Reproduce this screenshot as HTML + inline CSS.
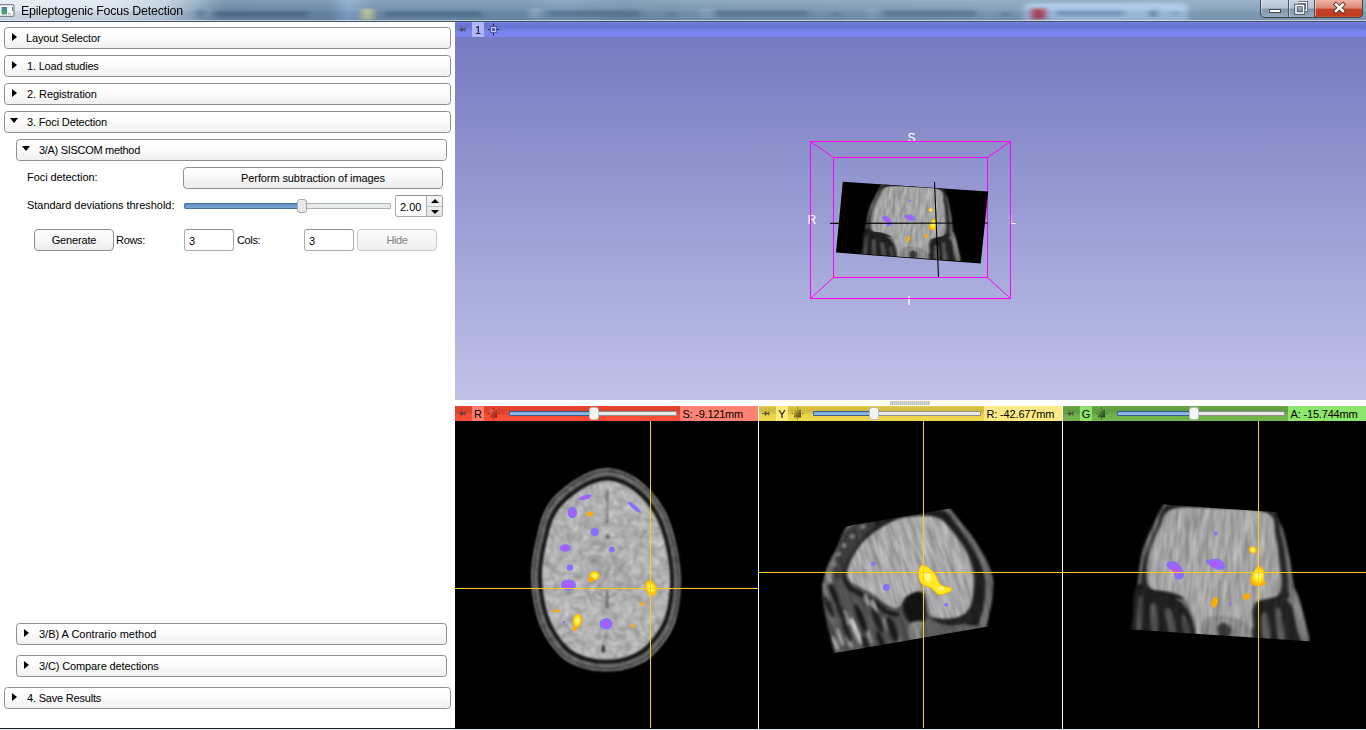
<!DOCTYPE html>
<html>
<head>
<meta charset="utf-8">
<title>Epileptogenic Focus Detection</title>
<style>
html,body{margin:0;padding:0;}
body{width:1366px;height:730px;overflow:hidden;position:relative;background:#fff;font-family:"Liberation Sans",sans-serif;font-size:11px;color:#000;}
.abs{position:absolute;}
/* title bar */
#titlebar{position:absolute;left:0;top:0;width:1366px;height:22px;overflow:hidden;background:#7b97b2;}
#title{position:absolute;left:21px;top:4px;font-size:12.4px;letter-spacing:-0.19px;line-height:15px;white-space:nowrap;color:#000;}
/* left panel */
#left{position:absolute;left:0;top:22px;width:455px;height:706px;background:#fff;}
.cbtn{position:absolute;height:20px;border:1px solid #8e8f8f;border-radius:3.5px;background:linear-gradient(to bottom,#ffffff 0,#fbfbfb 45%,#f0f0f0 100%);box-sizing:content-box;}
.cbtn span{position:absolute;left:21px;top:4px;line-height:13px;white-space:nowrap;}
.cbtn i{position:absolute;display:block;width:0;height:0;}
.cbtn i.r{left:7px;top:4.6px;border-left:5px solid #000;border-top:4.7px solid transparent;border-bottom:4.7px solid transparent;}
.cbtn i.d{left:5px;top:6px;border-top:5.5px solid #000;border-left:4.8px solid transparent;border-right:4.8px solid transparent;}
.lbl{position:absolute;white-space:nowrap;line-height:13px;}
.pbtn{position:absolute;border:1px solid #8e8f8f;border-radius:4px;box-sizing:border-box;background:linear-gradient(to bottom,#fefefe 0,#f7f7f7 50%,#ececec 100%);text-align:center;}
.edit{position:absolute;border:1px solid #a9abb0;border-top-color:#8d9096;border-radius:3px;box-sizing:border-box;background:#fff;}
.pbtn.dis{color:#838383;border-color:#c3c6ca;background:linear-gradient(to bottom,#fdfdfd 0,#f6f6f6 50%,#eeeeee 100%);}
#groove{position:absolute;left:184px;top:181px;width:205px;height:4px;border:1px solid #b0b0b0;border-radius:1px;background:#e7eaea;}
#groovefill{position:absolute;left:184px;top:181px;width:118px;height:4px;border:1px solid #4a6f9c;border-radius:2px;background:linear-gradient(to bottom,#5f8fc4,#7aa7d6);}
#handle{position:absolute;left:297px;top:177px;width:8px;height:12px;border:1px solid #a4a6a8;border-radius:3px;background:radial-gradient(circle at 1px 1px,#c9c9c9 0,#c9c9c9 .5px,transparent .8px) 1px 1px/3px 3px,#eeeeee;}
#spbtn{position:absolute;right:0;top:0;width:15px;height:20px;border-left:1px solid #abadb3;background:linear-gradient(to bottom,#f6f6f6,#e4e4e4);border-radius:0 2px 2px 0;}
#spbtn i{position:absolute;left:3.5px;width:0;height:0;border-left:4px solid transparent;border-right:4px solid transparent;}
#spbtn:after{content:"";position:absolute;left:0;top:10px;width:15px;height:1px;background:#c4c7cc;}
#spbtn i.u{top:3px;border-bottom:4px solid #000;}
#spbtn i.dn{top:14px;border-top:4px solid #000;}
/* right panel */
#view3d{position:absolute;left:455px;top:37px;width:911px;height:363px;background:linear-gradient(to bottom,#767ac0 0,#c0c2e8 100%);}
#bar3d{position:absolute;left:455px;top:22px;width:911px;height:15px;background:linear-gradient(to bottom,#6e78d6 0,#6a74d2 4px,#7b87ee 9px,#7b87ee 100%);}
.sbar{position:absolute;top:406px;height:15px;}
.sview{position:absolute;top:421px;height:308px;background:#000;overflow:hidden;}
</style>
</head>
<body>

<svg width="0" height="0" style="position:absolute">
<defs>
<filter id="texA" x="-5%" y="-5%" width="110%" height="110%" color-interpolation-filters="sRGB">
  <feGaussianBlur in="SourceGraphic" stdDeviation="0.9" result="b"/>
  <feTurbulence type="fractalNoise" baseFrequency="0.11" numOctaves="3" seed="7" result="n"/>
  <feColorMatrix in="n" type="matrix" values="1 0 0 0 0  1 0 0 0 0  1 0 0 0 0  0 0 0 0 1" result="g"/>
  <feComposite in="b" in2="g" operator="arithmetic" k1="0.30" k2="0.86" k3="0" k4="0" result="m"/>
  <feTurbulence type="fractalNoise" baseFrequency="0.045" numOctaves="2" seed="23" result="n2"/>
  <feColorMatrix in="n2" type="matrix" values="1 0 0 0 0  1 0 0 0 0  1 0 0 0 0  0 0 0 0 1" result="g2"/>
  <feComponentTransfer in="g2" result="c2"><feFuncR type="table" tableValues="1 1 1 1 1 1 1 1 .96 .86 .96 1 1 .96 .86 .96 1 1 1 1 1 1 1 1 1"/><feFuncG type="table" tableValues="1 1 1 1 1 1 1 1 .96 .86 .96 1 1 .96 .86 .96 1 1 1 1 1 1 1 1 1"/><feFuncB type="table" tableValues="1 1 1 1 1 1 1 1 .96 .86 .96 1 1 .96 .86 .96 1 1 1 1 1 1 1 1 1"/></feComponentTransfer>
  <feGaussianBlur in="c2" stdDeviation="0.9" result="c3"/>
  <feComposite in="m" in2="c3" operator="arithmetic" k1="1" k2="0" k3="0" k4="0" result="m2"/>
  <feComposite in="m2" in2="b" operator="in"/>
</filter>
<filter id="texS" x="-5%" y="-5%" width="110%" height="110%" color-interpolation-filters="sRGB">
  <feGaussianBlur in="SourceGraphic" stdDeviation="1.6 1.2" result="b"/>
  <feTurbulence type="fractalNoise" baseFrequency="0.2 0.035" numOctaves="2" seed="11" result="n"/>
  <feColorMatrix in="n" type="matrix" values="1 0 0 0 0  1 0 0 0 0  1 0 0 0 0  0 0 0 0 1" result="g"/>
  <feComposite in="b" in2="g" operator="arithmetic" k1="0.5" k2="0.75" k3="0" k4="0" result="m"/>
  <feComposite in="m" in2="b" operator="in"/>
</filter>
<filter id="bl" x="-30%" y="-30%" width="160%" height="160%"><feGaussianBlur stdDeviation="0.45"/></filter>
<radialGradient id="gp"><stop offset="0" stop-color="#c84cf0"/><stop offset="0.55" stop-color="#9a66ff"/><stop offset="1" stop-color="#8470ff"/></radialGradient>
<radialGradient id="gy"><stop offset="0" stop-color="#ffffb0"/><stop offset="0.5" stop-color="#ffee20"/><stop offset="1" stop-color="#ffa800"/></radialGradient>
</defs>
</svg>
<div id="titlebar"><svg class="abs" style="left:0;top:0" width="1366" height="22" viewBox="0 0 1366 22"><defs><linearGradient id="tbg" x1="0" y1="0" x2="1" y2="0"><stop offset="0.0000" stop-color="#e3ebf3"/><stop offset="0.0805" stop-color="#dbe5ee"/><stop offset="0.1208" stop-color="#c0cfdd"/><stop offset="0.1428" stop-color="#94acc3"/><stop offset="0.1625" stop-color="#6b89a6"/><stop offset="0.2416" stop-color="#6d8ba8"/><stop offset="0.2548" stop-color="#86a8ca"/><stop offset="0.2723" stop-color="#7392b0"/><stop offset="0.3807" stop-color="#7190ad"/><stop offset="0.4100" stop-color="#7d9bb8"/><stop offset="0.4539" stop-color="#7391ad"/><stop offset="0.5124" stop-color="#7b98b3"/><stop offset="0.6296" stop-color="#7f9bb5"/><stop offset="0.7321" stop-color="#84a0b9"/><stop offset="0.8785" stop-color="#88a3bc"/><stop offset="1.0000" stop-color="#88a3bc"/></linearGradient><linearGradient id="tbv" x1="0" y1="0" x2="0" y2="1"><stop offset="0" stop-color="#fff" stop-opacity=".16"/><stop offset=".4" stop-color="#fff" stop-opacity=".03"/><stop offset=".55" stop-color="#1c3858" stop-opacity=".10"/><stop offset=".9" stop-color="#1c3858" stop-opacity=".14"/><stop offset="1" stop-color="#fff" stop-opacity=".1"/></linearGradient><filter id="tbb" x="-5%" y="-50%" width="110%" height="200%"><feGaussianBlur stdDeviation="3 1.6"/></filter></defs><rect width="1366" height="22" fill="url(#tbg)"/><g filter="url(#tbb)"><rect x="214" y="11" width="94" height="6" fill="#3f5c7a" opacity="0.55"/><rect x="196" y="9" width="8" height="9" fill="#51708f" opacity="0.5"/><rect x="385" y="11" width="97" height="6" fill="#46637f" opacity="0.55"/><rect x="530" y="8" width="10" height="10" fill="#a9c3dc" opacity="0.5"/><rect x="548" y="10" width="92" height="7" fill="#4a6783" opacity="0.5"/><rect x="668" y="12" width="8" height="5" fill="#4a6783" opacity="0.4"/><rect x="700" y="9" width="12" height="9" fill="#9fb8cf" opacity="0.5"/><rect x="716" y="10" width="92" height="7" fill="#4a6783" opacity="0.5"/><rect x="832" y="12" width="8" height="5" fill="#4a6783" opacity="0.4"/><rect x="868" y="9" width="8" height="9" fill="#9fb8cf" opacity="0.45"/><rect x="884" y="10" width="92" height="7" fill="#4a6783" opacity="0.5"/><rect x="1002" y="12" width="8" height="5" fill="#4a6783" opacity="0.4"/><rect x="1024" y="3" width="164" height="22" rx="6" fill="#aecbec" opacity=".9"/><rect x="1030" y="8" width="17" height="12" rx="2" fill="#b04a62"/><rect x="1056" y="10" width="68" height="6" fill="#6f91b5" opacity=".7"/><rect x="1149" y="10" width="9" height="7" fill="#5d7f9f" opacity=".7"/><rect x="1173" y="11" width="5" height="5" fill="#6b8cab" opacity=".6"/><rect x="361" y="9" width="13" height="11" rx="2" fill="#d9d69a" opacity=".8"/></g><rect width="1366" height="22" fill="url(#tbv)"/><rect x="0" y="20" width="1366" height="1" fill="#dfe6ee" opacity=".75"/><rect x="0" y="21" width="1366" height="1" fill="#45525f"/><defs><linearGradient id="wb1" x1="0" y1="0" x2="0" y2="1"><stop offset="0" stop-color="#c9d5e2"/><stop offset=".45" stop-color="#b3c2d3"/><stop offset=".5" stop-color="#8395ab"/><stop offset="1" stop-color="#9aacc0"/></linearGradient><linearGradient id="wb2" x1="0" y1="0" x2="0" y2="1"><stop offset="0" stop-color="#eeb2a4"/><stop offset=".45" stop-color="#dd8672"/><stop offset=".5" stop-color="#c5442b"/><stop offset=".85" stop-color="#c03a20"/><stop offset="1" stop-color="#d56a40"/></linearGradient><clipPath id="wbc"><path d="M1260,-4 H1363 V13 Q1363,18 1358,18 H1265 Q1260,18 1260,13 Z"/></clipPath></defs><g clip-path="url(#wbc)"><rect x="1260" y="0" width="55" height="18" fill="url(#wb1)"/><rect x="1315" y="0" width="48" height="18" fill="url(#wb2)"/></g><path d="M1260.5,0 V13 Q1260.5,17.5 1265,17.5 H1358 Q1362.5,17.5 1362.5,13 V0" fill="none" stroke="#3c4450" stroke-width="1"/><path d="M1288.5,0 V17 M1314.5,0 V17" stroke="#4a5563" stroke-width="1"/><path d="M1289.5,0 V17 M1261.5,0 V13 M1315.5,0 V16" stroke="#fff" stroke-opacity=".45" stroke-width="1"/><rect x="1269.5" y="9.5" width="11" height="3" fill="#fff" stroke="#434d5a" stroke-width="1"/><path d="M1298.5,2.5 h8 v8 h-2" fill="none" stroke="#434d5a" stroke-width="3"/><path d="M1298.5,2.5 h8 v8 h-2" fill="none" stroke="#fff" stroke-width="1.4"/><rect x="1296" y="5.5" width="7.5" height="7.5" fill="none" stroke="#434d5a" stroke-width="3.4"/><rect x="1296" y="5.5" width="7.5" height="7.5" fill="none" stroke="#fff" stroke-width="1.6"/><path d="M1336,4.5 L1343,11 M1343,4.5 L1336,11" stroke="#4a3030" stroke-width="4.4" stroke-linecap="square"/><path d="M1336,4.5 L1343,11 M1343,4.5 L1336,11" stroke="#fff" stroke-width="2.6" stroke-linecap="square"/><defs><linearGradient id="aig" x1="0" y1="0" x2="0" y2="1"><stop offset="0" stop-color="#4a7cb8"/><stop offset=".35" stop-color="#3f9088"/><stop offset="1" stop-color="#4aa860"/></linearGradient></defs><rect x="-1" y="4.6" width="15" height="11.8" rx="1.2" fill="#fbfbfc" stroke="#80868e" stroke-width="1.2"/><rect x="1.6" y="7" width="5.5" height="7.5" fill="url(#aig)"/><rect x="8" y="13" width="3" height="1.6" fill="#b9bcc0"/><rect x="12" y="7" width="1" height="4" fill="url(#aig)"/></svg></div>
<div id="title">Epileptogenic Focus Detection</div>

<div id="left">
<div class="cbtn" style="left:4px;top:5px;width:445px"><i class="r"></i><span style="left:21px;letter-spacing:-0.13px">Layout Selector</span></div>
<div class="cbtn" style="left:4px;top:33px;width:445px"><i class="r"></i><span style="left:22px;letter-spacing:-0.2px">1. Load studies</span></div>
<div class="cbtn" style="left:4px;top:61px;width:445px"><i class="r"></i><span style="left:22px;letter-spacing:-0.07px">2. Registration</span></div>
<div class="cbtn" style="left:4px;top:89px;width:445px"><i class="d"></i><span style="left:22px;letter-spacing:-0.15px">3. Foci Detection</span></div>
<div class="cbtn" style="left:16px;top:117px;width:429px"><i class="d"></i><span style="left:22px;letter-spacing:-0.3px">3/A) SISCOM method</span></div>
<div class="lbl" style="left:27px;top:149px;letter-spacing:-0.07px">Foci detection:</div>
<div class="pbtn" style="left:183px;top:145px;width:260px;height:22px;line-height:20px;letter-spacing:-0.1px">Perform subtraction of images</div>
<div class="lbl" style="left:27px;top:177px;letter-spacing:-0.04px">Standard deviations threshold:</div>
<div id="groove"></div><div id="groovefill"></div><div id="handle"></div>
<div class="edit" id="spin" style="left:395px;top:173px;width:48px;height:22px;border-radius:3px"><span class="lbl" style="left:4px;top:5px">2.00</span><div id="spbtn"><i class="u"></i><i class="dn"></i></div></div>
<div class="pbtn" style="left:34px;top:207px;width:80px;height:22px;line-height:20px;letter-spacing:-0.17px">Generate</div>
<div class="lbl" style="left:116px;top:212px;letter-spacing:-0.3px">Rows:</div>
<div class="edit" style="left:184px;top:207px;width:50px;height:22px"><span class="lbl" style="left:4px;top:5px">3</span></div>
<div class="lbl" style="left:237px;top:212px;letter-spacing:-0.37px">Cols:</div>
<div class="edit" style="left:304px;top:207px;width:50px;height:22px"><span class="lbl" style="left:4px;top:5px">3</span></div>
<div class="pbtn dis" style="left:357px;top:207px;width:80px;height:22px;line-height:20px;letter-spacing:-0.4px">Hide</div>
<div class="cbtn" style="left:16px;top:601px;width:429px"><i class="r"></i><span style="left:22px;letter-spacing:0px">3/B) A Contrario method</span></div>
<div class="cbtn" style="left:16px;top:633px;width:429px"><i class="r"></i><span style="left:22px;letter-spacing:-0.12px">3/C) Compare detections</span></div>
<div class="cbtn" style="left:4px;top:665px;width:445px"><i class="r"></i><span style="left:22px;letter-spacing:-0.2px">4. Save Results</span></div>
</div>

<div class="abs" style="left:455px;top:22px;width:911px;height:15px;background:linear-gradient(to bottom,#7d8af2 0,#6d79d8 1px,#6873d0 5px,#7884ea 9px,#7b87f0 15px)"><svg class="abs" style="left:3px;top:4px" width="9" height="7" viewBox="0 0 9 7"><path d="M0,3.5 H3" stroke="#555" stroke-width="1" opacity=".7"/><path d="M2.6,1.6 h1.6 v1.2 h2.3 v-1.4 h0.9 v4.2 h-0.9 v-1.4 h-2.3 v1.2 h-1.6 z" fill="#3c3c3c" opacity=".85"/></svg><div class="abs" style="left:17px;top:0;width:12px;height:15px;background:#b1b6fb;text-align:center;line-height:17px;font-size:11px;overflow:hidden">1</div><svg class="abs" style="left:32px;top:1px" width="13" height="13" viewBox="0 0 13 13"><rect x="3" y="3" width="7" height="7" fill="#4b509a" opacity=".75"/><rect x="4.5" y="4.5" width="4" height="4" fill="none" stroke="#c3c6f7" stroke-width="1"/><path d="M6.5,0.5 V3 M6.5,10 V12.5 M0.8,6.5 H3 M10,6.5 H12.2" stroke="#23264f" stroke-width="1"/></svg></div>
<div class="abs" style="left:455px;top:406px;width:303px;height:15px;background:linear-gradient(to bottom,#f2432c 0,#e4452f 1px,#d8412c 5px,#f64b33 9px,#fb4e36 15px)"><svg class="abs" style="left:3px;top:4px" width="9" height="7" viewBox="0 0 9 7"><path d="M0,3.5 H3" stroke="#555" stroke-width="1" opacity=".7"/><path d="M2.6,1.6 h1.6 v1.2 h2.3 v-1.4 h0.9 v4.2 h-0.9 v-1.4 h-2.3 v1.2 h-1.6 z" fill="#3c3c3c" opacity=".85"/></svg><div class="abs" style="left:17px;top:0;width:12px;height:15px;background:#ff7e6f;text-align:center;line-height:17px;font-size:11px;overflow:hidden">R</div><svg class="abs" style="left:32px;top:1px" width="13" height="13" viewBox="0 0 13 13"><defs><linearGradient id="ig5a1a10" x1="0" y1="0" x2="1" y2="1"><stop offset="0" stop-color="#ff6a58"/><stop offset="1" stop-color="#7a1408"/></linearGradient></defs><rect x="3" y="2.5" width="7" height="8" fill="url(#ig5a1a10)"/><g fill="#5a1a10"><rect x="6" y="0.5" width="1" height="1"/><rect x="6" y="11.5" width="1" height="1"/><rect x="0.8" y="6" width="1" height="1"/><rect x="11.2" y="6" width="1" height="1"/></g></svg><div class="abs" style="left:54px;top:5px;width:166px;height:3px;border:1px solid #8e8e8e;background:#e9e9e9;border-radius:1px"></div><div class="abs" style="left:54px;top:5px;width:83px;height:3px;border:1px solid #3b5d87;background:linear-gradient(to bottom,#7eaadf,#93bdea);border-radius:1px"></div><div class="abs" style="left:134px;top:1px;width:8px;height:11px;border:1px solid #b9bcc0;background:#f3f3f3;border-radius:3px;box-shadow:inset 0 0 0 1px #fafafa"></div><div class="abs" style="left:225px;top:0;width:78px;height:15px;background:#ff8373"></div><div class="abs" style="left:227.5px;top:2px;line-height:13px;font-size:11px;white-space:nowrap;letter-spacing:-0.23px">S: -9.121mm</div></div>
<div class="abs" style="left:759px;top:406px;width:303px;height:15px;background:linear-gradient(to bottom,#efd84e 0,#dcc445 1px,#cfb83f 5px,#ecd44b 9px,#f1d94e 15px)"><svg class="abs" style="left:3px;top:4px" width="9" height="7" viewBox="0 0 9 7"><path d="M0,3.5 H3" stroke="#555" stroke-width="1" opacity=".7"/><path d="M2.6,1.6 h1.6 v1.2 h2.3 v-1.4 h0.9 v4.2 h-0.9 v-1.4 h-2.3 v1.2 h-1.6 z" fill="#3c3c3c" opacity=".85"/></svg><div class="abs" style="left:17px;top:0;width:12px;height:15px;background:#fdea7d;text-align:center;line-height:17px;font-size:11px;overflow:hidden">Y</div><svg class="abs" style="left:32px;top:1px" width="13" height="13" viewBox="0 0 13 13"><defs><linearGradient id="ig4a4010" x1="0" y1="0" x2="1" y2="1"><stop offset="0" stop-color="#d8c050"/><stop offset="1" stop-color="#4a3c08"/></linearGradient></defs><rect x="3" y="2.5" width="7" height="8" fill="url(#ig4a4010)"/><g fill="#4a4010"><rect x="6" y="0.5" width="1" height="1"/><rect x="6" y="11.5" width="1" height="1"/><rect x="0.8" y="6" width="1" height="1"/><rect x="11.2" y="6" width="1" height="1"/></g></svg><div class="abs" style="left:54px;top:5px;width:166px;height:3px;border:1px solid #8e8e8e;background:#e9e9e9;border-radius:1px"></div><div class="abs" style="left:54px;top:5px;width:59px;height:3px;border:1px solid #3b5d87;background:linear-gradient(to bottom,#7eaadf,#93bdea);border-radius:1px"></div><div class="abs" style="left:110px;top:1px;width:8px;height:11px;border:1px solid #b9bcc0;background:#f3f3f3;border-radius:3px;box-shadow:inset 0 0 0 1px #fafafa"></div><div class="abs" style="left:225px;top:0;width:78px;height:15px;background:#fdea86"></div><div class="abs" style="left:227.5px;top:2px;line-height:13px;font-size:11px;white-space:nowrap;letter-spacing:-0.16px">R: -42.677mm</div></div>
<div class="abs" style="left:1063px;top:406px;width:303px;height:15px;background:linear-gradient(to bottom,#72b84e 0,#66a445 1px,#5f9a40 5px,#6eb04b 9px,#72b64e 15px)"><svg class="abs" style="left:3px;top:4px" width="9" height="7" viewBox="0 0 9 7"><path d="M0,3.5 H3" stroke="#555" stroke-width="1" opacity=".7"/><path d="M2.6,1.6 h1.6 v1.2 h2.3 v-1.4 h0.9 v4.2 h-0.9 v-1.4 h-2.3 v1.2 h-1.6 z" fill="#3c3c3c" opacity=".85"/></svg><div class="abs" style="left:17px;top:0;width:12px;height:15px;background:#8ce26a;text-align:center;line-height:17px;font-size:11px;overflow:hidden">G</div><svg class="abs" style="left:32px;top:1px" width="13" height="13" viewBox="0 0 13 13"><defs><linearGradient id="ig1c3a10" x1="0" y1="0" x2="1" y2="1"><stop offset="0" stop-color="#6aa850"/><stop offset="1" stop-color="#1c3a10"/></linearGradient></defs><rect x="3" y="2.5" width="7" height="8" fill="url(#ig1c3a10)"/><g fill="#1c3a10"><rect x="6" y="0.5" width="1" height="1"/><rect x="6" y="11.5" width="1" height="1"/><rect x="0.8" y="6" width="1" height="1"/><rect x="11.2" y="6" width="1" height="1"/></g></svg><div class="abs" style="left:54px;top:5px;width:166px;height:3px;border:1px solid #8e8e8e;background:#e9e9e9;border-radius:1px"></div><div class="abs" style="left:54px;top:5px;width:75px;height:3px;border:1px solid #3b5d87;background:linear-gradient(to bottom,#7eaadf,#93bdea);border-radius:1px"></div><div class="abs" style="left:126px;top:1px;width:8px;height:11px;border:1px solid #b9bcc0;background:#f3f3f3;border-radius:3px;box-shadow:inset 0 0 0 1px #fafafa"></div><div class="abs" style="left:225px;top:0;width:78px;height:15px;background:#8ee56b"></div><div class="abs" style="left:227.5px;top:2px;line-height:13px;font-size:11px;white-space:nowrap;letter-spacing:-0.17px">A: -15.744mm</div></div>
<div class="abs" style="left:455px;top:400px;width:911px;height:6px;background:#fff"></div><div class="abs" style="left:890px;top:401px;width:40px;height:4px;background:repeating-linear-gradient(to right,#c2c2c2 0,#c2c2c2 1px,#d6d6d6 1px,#d6d6d6 2px)"></div>
<div id="view3d"><svg class="abs" style="left:0;top:0" width="911" height="363" viewBox="0 0 911 363"><g fill="#fff" font-family="Liberation Sans,sans-serif" font-size="13.5px" text-anchor="middle"><text x="456.5" y="105" transform="translate(456.5 0) scale(.88 1) translate(-456.5 0)">S</text><text x="357" y="187" transform="translate(357 0) scale(.9 1) translate(-357 0)">R</text><text x="557.3" y="187" transform="translate(557.3 0) scale(.9 1) translate(-557.3 0)">L</text><text x="454" y="268">I</text></g><g stroke="#ff00ff" stroke-width="1" fill="none"><path d="M355.5,104.5 L555.5,104.5 L555.5,261.5 L355.5,261.5Z"/><path d="M378.5,120.5 L532.5,120.5 L532.5,240.5 L378.5,240.5Z"/><path d="M355.5,104.5 L378.5,120.5"/><path d="M555.5,104.5 L532.5,120.5"/><path d="M555.5,261.5 L532.5,240.5"/><path d="M355.5,261.5 L378.5,240.5"/></g><path d="M387.8,144.8 L533.2,154.6 L525.7,226.6 L381,215.6Z" fill="#000"/><use href="#corimg" transform="matrix(0.5614 0.0037 -0.0191 0.5561 371.60 100.59)"/><path d="M479.5,145.0 L483.5,240.0 M375.0,186.4 L532.5,186.0" stroke="#000" stroke-width="1.1" fill="none"/></svg></div>
<div class="sview" style="left:455px;width:303px"><svg class="abs" style="left:0;top:0" width="303" height="307" viewBox="0 0 303 307"><g filter="url(#texA)"><path d="M152.5,46.3 C162.2,46.3 172.2,50.4 181,56 C189.8,61.6 198.7,70.8 205,80 C211.3,89.2 215.4,98.2 219,111 C222.6,123.8 226.4,141.7 226.7,157 C226.9,172.3 225.1,190.1 220.5,203 C215.9,215.9 206.4,227.1 199,234.5 C191.6,241.9 184,244.7 176,247.5 C168,250.3 159.5,251.2 151.2,251.2 C142.9,251.2 133.9,250.3 126,247.5 C118,244.7 110.6,241.9 103.5,234.5 C96.4,227.1 88.2,215.9 83.5,203 C78.8,190.1 75.5,172.3 75.2,157 C75,141.7 78.8,123.8 82,111 C85.2,98.2 87.7,89.2 94.5,80 C101.3,70.8 113.3,61.6 123,56 C132.7,50.4 142.8,46.3 152.5,46.3Z" fill="#6c6c6c"/><path d="M152.4,50 C161.7,50 171.3,53.9 179.7,59.3 C188,64.7 196.5,73.6 202.6,82.5 C208.6,91.3 212.5,100 215.9,112.4 C219.4,124.8 223.1,142 223.3,156.8 C223.5,171.6 221.8,188.7 217.4,201.2 C213,213.6 203.9,224.4 196.8,231.6 C189.8,238.7 182.5,241.4 174.9,244.1 C167.3,246.8 159.1,247.7 151.2,247.7 C143.2,247.7 134.7,246.8 127.1,244.1 C119.5,241.4 112.4,238.7 105.6,231.6 C98.9,224.4 91,213.6 86.5,201.2 C82,188.7 78.8,171.6 78.6,156.8 C78.4,142 82,124.8 85.1,112.4 C88.2,100 90.5,91.3 97,82.5 C103.6,73.6 115,64.7 124.3,59.3 C133.5,53.9 143.2,50 152.4,50Z" fill="none" stroke="#333" stroke-width="1.3"/><path d="M152.4,51 C161.5,51 171,54.9 179.2,60.3 C187.4,65.6 195.8,74.4 201.8,83.2 C207.7,91.9 211.5,100.5 214.9,112.8 C218.3,125.1 221.9,142.1 222.2,156.7 C222.4,171.4 220.7,188.3 216.3,200.7 C212,213 203.1,223.7 196.1,230.7 C189.1,237.8 182,240.5 174.5,243.2 C167,245.8 159,246.7 151.2,246.7 C143.4,246.7 135,245.8 127.5,243.2 C120,240.5 113,237.8 106.3,230.7 C99.7,223.7 92,213 87.6,200.7 C83.1,188.3 80,171.4 79.7,156.7 C79.5,142.1 83.1,125.1 86.1,112.8 C89.2,100.5 91.5,91.9 97.9,83.2 C104.3,74.4 115.6,65.6 124.7,60.3 C133.8,54.9 143.3,51 152.4,51Z" fill="#6a6a6a"/><path d="M152.3,55.2 C161,55.2 170,58.9 177.8,64.1 C185.7,69.2 193.7,77.6 199.3,86 C205,94.4 208.6,102.7 211.9,114.4 C215.1,126.1 218.5,142.5 218.8,156.5 C219,170.5 217.3,186.8 213.2,198.6 C209.1,210.4 200.6,220.6 194,227.4 C187.3,234.2 180.5,236.8 173.4,239.3 C166.2,241.8 158.6,242.7 151.2,242.7 C143.7,242.7 135.7,241.8 128.6,239.3 C121.5,236.8 114.8,234.2 108.5,227.4 C102.1,220.6 94.8,210.4 90.6,198.6 C86.4,186.8 83.4,170.5 83.2,156.5 C82.9,142.5 86.4,126.1 89.2,114.4 C92.1,102.7 94.3,94.4 100.4,86 C106.5,77.6 117.3,69.2 125.9,64.1 C134.6,58.9 143.7,55.2 152.3,55.2Z" fill="#141414"/><path d="M152.3,59.4 C160.4,59.4 169,63 176.3,67.9 C183.7,72.8 191.3,80.9 196.6,88.9 C202,96.9 205.4,104.8 208.5,116 C211.5,127.2 214.8,142.8 215,156.2 C215.2,169.7 213.6,185.2 209.7,196.5 C205.8,207.8 197.8,217.6 191.6,224.1 C185.3,230.6 178.9,233 172.1,235.4 C165.4,237.9 158.2,238.7 151.2,238.7 C144.1,238.7 136.6,237.9 129.9,235.4 C123.2,233 116.8,230.6 110.9,224.1 C104.9,217.6 97.9,207.8 94,196.5 C90,185.2 87.2,169.7 86.9,156.2 C86.7,142.8 90,127.2 92.7,116 C95.4,104.8 97.5,96.9 103.3,88.9 C109,80.9 119.2,72.8 127.3,67.9 C135.5,63 144.1,59.4 152.3,59.4Z" fill="#b6b6b6"/><path d="M152.2,68.2 L152.2,102.2" stroke="#7a7a7a" stroke-width="1.5"/><ellipse cx="152.8" cy="115.6" rx="1.6" ry="2.2" fill="#555"/><ellipse cx="152.2" cy="100.2" rx="1.2" ry="1.5" fill="#666"/><ellipse cx="152.2" cy="151.0" rx="22.0" ry="17.0" fill="#adadad"/><path d="M152.2,169.2 L152.2,187.2" stroke="#555" stroke-width="1.6"/><path d="M142.0,172.6 L151.0,176.6" stroke="#777" stroke-width="1.2"/><path d="M162.3,172.6 L153.3,176.6" stroke="#777" stroke-width="1.2"/><ellipse cx="148.2" cy="228.0" rx="1.8" ry="4.0" fill="#333"/><path d="M152.2,209.5 L149.2,223.5" stroke="#888" stroke-width="1.2"/></g><g filter="url(#bl)"><ellipse cx="130.3" cy="76.2" rx="6.5" ry="2.4" fill="url(#gp)" transform="rotate(-18 130.3 76.2)"/><ellipse cx="117.4" cy="91.6" rx="4.6" ry="5.7" fill="url(#gp)"/><ellipse cx="139.8" cy="111.0" rx="4.0" ry="4.0" fill="#8a6eff"/><ellipse cx="110.3" cy="127.0" rx="5.5" ry="3.8" fill="url(#gp)"/><ellipse cx="156.8" cy="128.5" rx="2.9" ry="2.9" fill="#8a6eff"/><ellipse cx="114.9" cy="146.7" rx="3.2" ry="3.1" fill="#8a6eff"/><ellipse cx="113.4" cy="164.0" rx="7.5" ry="5.6" fill="url(#gp)"/><ellipse cx="179.6" cy="86.4" rx="8.5" ry="2.0" fill="#8a6eff" transform="rotate(40 179.6 86.4)"/><ellipse cx="151.2" cy="202.8" rx="6.6" ry="5.6" fill="url(#gp)"/><ellipse cx="109.0" cy="201.2" rx="1.2" ry="1.2" fill="#8a6eff"/><ellipse cx="134.9" cy="93.1" rx="3.2" ry="2.5" fill="#ffac00"/><ellipse cx="139.5" cy="154.7" rx="5.2" ry="4.6" fill="url(#gy)"/><ellipse cx="135.8" cy="158.4" rx="3.0" ry="2.6" fill="#ffac00"/><ellipse cx="195.9" cy="167.0" rx="5.6" ry="8.3" fill="url(#gy)" transform="rotate(-20 195.9 167.0)"/><ellipse cx="122.3" cy="199.7" rx="4.4" ry="7.0" fill="url(#gy)" transform="rotate(8 122.3 199.7)"/><ellipse cx="119.5" cy="207.7" rx="2.6" ry="2.2" fill="#ffac00"/><ellipse cx="101.0" cy="189.8" rx="4.5" ry="1.1" fill="#ffac00"/><ellipse cx="186.7" cy="182.8" rx="1.8" ry="2.0" fill="#ffac00"/><ellipse cx="177.7" cy="204.9" rx="2.0" ry="1.8" fill="#ffac00"/></g><rect x="195" y="0" width="1" height="307" fill="#ffcc1a"/><rect x="0" y="167" width="303" height="1" fill="#ffcc1a"/></svg></div>
<div class="sview" style="left:759px;width:303px"><svg class="abs" style="left:0;top:0" width="303" height="307" viewBox="0 0 303 307"><defs><clipPath id="cs"><path d="M24.5,115.9 L270.3,74 L320.2,189.5 L12.8,243Z"/></clipPath></defs><g clip-path="url(#cs)"><g filter="url(#texS)" transform="rotate(-18 150 150)"><g transform="rotate(18 150 150)"><path d="M93.4,99.1 C103.8,91.9 124.8,86.3 139.5,83.3 C154.1,80.3 170.7,77.9 181.4,81 C192.1,84.1 196.7,94.2 203.5,101.9 C210.3,109.7 217.1,119 222.1,127.6 C227.2,136.1 231.7,145.4 233.8,153.2 C235.8,160.9 235,167.1 234.5,174.1 C234,181.1 232,188.5 230.7,195.1 C229.5,201.7 228,206.7 226.8,213.7 C225.5,220.7 237.1,231.9 223.3,237 C209.5,242 166.6,243 144.1,244 C121.6,245 99.4,244.2 88.3,243 C77.1,241.9 79.7,240.3 77.1,237 C74.5,233.6 74.4,229.2 72.7,223 C70.9,216.8 68.5,208.3 66.8,199.7 C65.2,191.2 62.7,180.2 62.6,171.8 C62.6,163.3 64,156.5 66.4,149 C68.8,141.4 72.6,134.9 77.1,126.6 C81.6,118.3 83,106.4 93.4,99.1Z" fill="#6a6a6a" /><path d="M90.6,108.9 C100.7,100 124.3,93.7 139.5,90.3 C154.6,86.9 171.5,85.9 181.4,88.4 C191.3,91 193.2,98.5 198.8,105.4 C204.5,112.3 210.8,121.9 215.1,129.9 C219.5,137.8 223.3,145.8 225.2,153.2 C227,160.5 226.6,167.1 226.1,174.1 C225.6,181.1 224.1,189.4 222.1,195.1 C220.1,200.7 220.8,206.3 214,207.9 C207.2,209.4 196.9,206.5 181.4,204.4 C165.9,202.2 137.5,201.3 120.8,195.1 C104.2,188.9 88.3,175.7 81.3,167.1 C74.3,158.6 77.4,153.5 78.9,143.8 C80.5,134.1 80.5,117.8 90.6,108.9Z" fill="#1d1d1d" /><path d="M85.9,111.3 C91.9,103.9 105.7,98.1 111.5,99.6 C117.4,101.2 122,108.5 120.8,120.6 C119.7,132.6 111.5,163.3 104.6,171.8 C97.6,180.3 83.8,176.4 78.9,171.8 C74.1,167.1 74.3,153.9 75.4,143.8 C76.6,133.8 79.9,118.6 85.9,111.3Z" fill="#3c3c3c" /><ellipse cx="103.9" cy="105.7" rx="2.6" ry="2.2" fill="#8c8c8c" transform="rotate(-40 103.9 105.7)"/><ellipse cx="93.4" cy="115.4" rx="2.6" ry="2.2" fill="#8c8c8c" transform="rotate(-40 93.4 115.4)"/><ellipse cx="85.2" cy="124.5" rx="2.6" ry="2.2" fill="#8c8c8c" transform="rotate(-40 85.2 124.5)"/><ellipse cx="79.2" cy="133.4" rx="2.6" ry="2.2" fill="#8c8c8c" transform="rotate(-40 79.2 133.4)"/><ellipse cx="74.5" cy="143.4" rx="2.6" ry="2.2" fill="#8c8c8c" transform="rotate(-40 74.5 143.4)"/><ellipse cx="71.0" cy="153.9" rx="2.6" ry="2.2" fill="#8c8c8c" transform="rotate(-40 71.0 153.9)"/><ellipse cx="68.7" cy="164.8" rx="2.6" ry="2.2" fill="#8c8c8c" transform="rotate(-40 68.7 164.8)"/><path d="M127.8,100.1 C125.7,101.5 119.6,104.6 115,108.5 C110.4,112.3 104.4,118.4 100.4,123.4 C96.3,128.3 93.1,133.1 90.6,138 C88.1,142.9 86.2,148 85.5,152.7 C84.7,157.4 85.8,163.8 85.9,166" fill="none" stroke="#262626" stroke-width="3.2"/><path d="M65,167.6 C68.5,162.6 78.2,154.8 85.9,155.5 C93.7,156.2 104.6,166.7 111.5,171.8 C118.5,176.8 122.4,183.8 127.8,185.8 C133.3,187.7 137.5,185 144.1,183.4 C150.7,181.9 162.8,169.8 167.4,176.4 C172.1,183 179.8,213.3 172.1,223 C164.3,232.7 134.8,232.3 120.8,234.7 C106.9,237 95.5,237.2 88.3,237 C81,236.7 79.9,237.1 77.1,233.3 C74.3,229.4 73.6,221.6 71.5,213.7 C69.4,205.8 65.6,193.4 64.5,185.8 C63.4,178.1 61.4,172.6 65,167.6Z" fill="#505050" /><path d="M103.4,121.7 C107.6,117.1 112.1,113 118.5,108.9 C124.9,104.8 132.1,99.4 141.8,97.3 C151.5,95.1 168,93.8 176.7,96.1 C185.5,98.4 189,105.2 194.2,111.3 C199.4,117.3 204.7,125.2 208.2,132.2 C211.6,139.2 213.7,146.2 214.7,153.2 C215.6,160.1 215.1,167.9 214,174.1 C212.9,180.3 211.7,186.5 208.2,190.4 C204.7,194.3 199,196.6 193,197.4 C187,198.2 176.5,198.2 172.1,195.1 C167.6,192 167.8,182.7 166.3,178.8 C164.7,174.9 165.6,172.5 162.8,171.8 C159.9,171.1 152.2,173.2 149.3,174.6 C146.3,176 146.9,178.1 145.1,180.2 C143.2,182.2 141.3,186.3 138.3,186.9 C135.4,187.6 131.5,186.4 127.4,184.1 C123.3,181.8 118,176.1 113.6,173.2 C109.3,170.2 105.2,168.7 101.3,166.4 C97.4,164.2 92.5,162.2 90.3,159.7 C88.2,157.2 87.7,155.3 88.3,151.5 C88.8,147.7 90.9,141.8 93.4,136.9 C95.9,131.9 99.2,126.4 103.4,121.7Z" fill="#a8a8a8" /><path d="M85,155.5 C86,157.4 88.1,163.6 91,166.7 C94,169.7 98.7,171.3 102.7,173.7 C106.7,176 110.8,177.8 115,180.6 C119.2,183.5 123.8,188.7 127.8,190.9 C131.9,193.1 137.5,193.2 139.5,193.7" fill="none" stroke="#1a1a1a" stroke-width="4.6"/><path d="M146.5,176.4 C149.7,173.2 160.9,167.9 164.2,171.8 C167.4,175.7 168.1,194.8 166,199.7 C164,204.6 155.4,202.6 151.8,201.1 C148.2,199.7 145.5,195.2 144.6,191.1 C143.7,187 143.2,179.7 146.5,176.4Z" fill="#121212" /><path d="M150.7,203.5 C152.7,200.3 161.8,198.5 164.2,200.7 C166.5,202.8 166.6,213.4 164.6,216.5 C162.6,219.6 154.4,221.5 152,219.3 C149.7,217.1 148.6,206.6 150.7,203.5Z" fill="#858585" /><path d="M167.4,199.7 C172.1,196 187.6,200.1 195.4,200.9 C203.1,201.7 208.5,203.8 214,204.4 C219.4,205 226,202.8 227.9,204.4 C229.9,205.9 235.7,210.6 225.6,213.7 C215.5,216.8 177.1,225.3 167.4,223 C157.7,220.7 162.8,203.4 167.4,199.7Z" fill="#606060" /><path d="M172.1,197.4 C173.6,196.4 193.4,199.7 200,198.6 C206.6,197.4 209.3,190.2 211.7,190.4 C214,190.6 217.5,197.4 214,199.7 C210.5,202.1 197.7,204.8 190.7,204.4 C183.7,204 170.5,198.4 172.1,197.4Z" fill="#252525" /><ellipse cx="96.7" cy="209.5" rx="2.3" ry="13.6" fill="#e8e8e8" transform="rotate(-22 96.7 209.5)"/><ellipse cx="99.6" cy="215.7" rx="1.8" ry="8.5" fill="#d0d0d0" transform="rotate(-22 99.6 215.7)"/><ellipse cx="108.1" cy="178.7" rx="1.6" ry="6.8" fill="#bdbdbd" transform="rotate(-22 108.1 178.7)"/><ellipse cx="115.2" cy="184.9" rx="1.6" ry="7.6" fill="#c4c4c4" transform="rotate(-22 115.2 184.9)"/><ellipse cx="87.8" cy="196.5" rx="2.0" ry="8.5" fill="#a4a4a4" transform="rotate(-22 87.8 196.5)"/><ellipse cx="80.9" cy="215.7" rx="2.1" ry="10.2" fill="#a8a8a8" transform="rotate(-22 80.9 215.7)"/><ellipse cx="76.3" cy="222.6" rx="2.1" ry="8.5" fill="#b4b4b4" transform="rotate(-22 76.3 222.6)"/><ellipse cx="69.7" cy="156.8" rx="2.1" ry="8.5" fill="#959595" transform="rotate(-22 69.7 156.8)"/><ellipse cx="66.7" cy="171.2" rx="2.1" ry="10.2" fill="#858585" transform="rotate(-22 66.7 171.2)"/><ellipse cx="127.2" cy="203.4" rx="2.1" ry="8.5" fill="#959595" transform="rotate(-22 127.2 203.4)"/><ellipse cx="90.2" cy="219.8" rx="1.8" ry="8.5" fill="#b0b0b0" transform="rotate(-22 90.2 219.8)"/><ellipse cx="72.4" cy="196.5" rx="1.8" ry="10.2" fill="#7c7c7c" transform="rotate(-22 72.4 196.5)"/><ellipse cx="110.8" cy="215.7" rx="1.8" ry="8.5" fill="#8a8a8a" transform="rotate(-22 110.8 215.7)"/><ellipse cx="138.2" cy="215.7" rx="2.1" ry="8.5" fill="#9a9a9a" transform="rotate(-22 138.2 215.7)"/><ellipse cx="75.2" cy="173.2" rx="2.8" ry="11.9" fill="#161616" transform="rotate(-22 75.2 173.2)"/><ellipse cx="101.9" cy="197.2" rx="3.0" ry="15.3" fill="#161616" transform="rotate(-22 101.9 197.2)"/><ellipse cx="87.8" cy="210.2" rx="2.3" ry="11.9" fill="#1e1e1e" transform="rotate(-22 87.8 210.2)"/><ellipse cx="118.3" cy="199.3" rx="3.0" ry="13.6" fill="#1a1a1a" transform="rotate(-22 118.3 199.3)"/><ellipse cx="133.4" cy="208.2" rx="3.9" ry="13.6" fill="#181818" transform="rotate(-22 133.4 208.2)"/><ellipse cx="82.0" cy="191.1" rx="2.5" ry="11.9" fill="#1c1c1c" transform="rotate(-22 82.0 191.1)"/><ellipse cx="106.7" cy="223.9" rx="2.8" ry="10.2" fill="#1c1c1c" transform="rotate(-22 106.7 223.9)"/><ellipse cx="69.7" cy="185.6" rx="2.3" ry="11.9" fill="#202020" transform="rotate(-22 69.7 185.6)"/><ellipse cx="121.8" cy="219.8" rx="2.8" ry="10.2" fill="#1e1e1e" transform="rotate(-22 121.8 219.8)"/></g></g></g><g filter="url(#bl)"><path d="M162.3,144.5 C164,143.7 167.3,145 169.7,146.6 C172.1,148.3 174.8,151.5 176.7,154.3 C178.7,157.2 178.8,161.5 181.4,163.6 C183.9,165.8 190.5,166 192.1,167.1 C193.6,168.3 192.7,169.5 190.7,170.6 C188.7,171.7 183.3,174.2 180.2,173.7 C177.1,173.1 175.1,169 172.1,167.1 C169.1,165.3 164.4,165 162.3,162.5 C160.2,160 159.5,155 159.5,152 C159.5,149 160.6,145.4 162.3,144.5Z" fill="#ffea20" stroke="#ffa800" stroke-width="0.9"/><ellipse cx="168.6" cy="156.0" rx="3.4" ry="5.0" fill="#fff780" transform="rotate(-25 168.6 156.0)"/><ellipse cx="181.8" cy="167.6" rx="3.6" ry="2.2" fill="#fff470" transform="rotate(-15 181.8 167.6)"/><ellipse cx="114.3" cy="142.7" rx="2.3" ry="1.9" fill="#8a6eff"/><ellipse cx="127.4" cy="166.4" rx="3.4" ry="3.4" fill="#8a6eff"/><ellipse cx="187.2" cy="183.7" rx="2.1" ry="1.8" fill="#8a6eff"/></g><rect x="164" y="0" width="1" height="307" fill="#ffcc1a"/><rect x="0" y="151" width="303" height="1" fill="#ffcc1a"/></svg></div>
<div class="sview" style="left:1063px;width:303px"><svg class="abs" style="left:0;top:0" width="303" height="307" viewBox="0 0 303 307"><clipPath id="cc"><path d="M43.3,79.6 L280.4,95.7 L299.1,223.8 L17.9,205.2Z"/></clipPath><g id="corimg"><g clip-path="url(#cc)"><g filter="url(#texS)" transform="rotate(3.5 150 150)"><g transform="rotate(-3.5 150 150)"><path d="M104.2,77.8 C113.7,76.9 140.6,77.5 156.8,78.3 C172.9,79.1 191.9,80.6 201,82.5 C210.2,84.4 208.9,86.8 211.7,90 C214.5,93.1 216.1,98.1 217.8,101.6 C219.4,105.1 219.8,104.7 221.5,110.9 C223.2,117.1 226,129.5 227.8,138.8 C229.6,148.2 230.2,157.5 232.4,166.8 C234.7,176.1 238.5,185.4 241.1,194.7 C243.6,204 246.5,216.5 247.6,222.7 C248.7,228.9 262.7,230 247.6,232 C232.4,233.9 184.7,234.1 156.8,234.3 C128.8,234.5 94.5,234.3 79.9,233.1 C65.4,232 71.3,231.4 69.7,227.3 C68.1,223.2 69.9,215.7 70.2,208.7 C70.4,201.7 70.4,194 71.1,185.4 C71.8,176.9 73.1,166.8 74.4,157.5 C75.6,148.2 76.1,138.5 78.5,129.5 C81,120.6 85.8,111.5 89.3,103.9 C92.7,96.3 97,88.2 99.5,83.9 C102,79.6 94.6,78.8 104.2,77.8Z" fill="#6c6c6c" /><path d="M71.6,166.8 C73.7,163.7 81.6,159 84.6,162.1 C87.5,165.2 90,176.9 89.3,185.4 C88.5,194 83,208.7 79.9,213.4 C76.9,218 72.4,218.8 71.1,213.4 C69.8,207.9 71.9,188.5 72,180.8 C72.1,173 69.5,169.9 71.6,166.8Z" fill="#1a1a1a" /><path d="M106.5,83 C117,79.2 139.8,82.3 156.8,83.4 C173.8,84.5 198.3,84.5 208.5,89.5 C218.6,94.5 215.4,104.6 217.8,113.2 C220.1,121.9 221.5,132.3 222.7,141.2 C223.8,150.1 224.7,160.6 224.8,166.8 C224.8,173 228.6,175.3 223.1,178.4 C217.6,181.5 208.6,185.4 191.7,185.4 C174.8,185.4 140.1,181.1 121.8,178.4 C103.6,175.7 89.3,174.5 82.3,169.1 C75.2,163.7 79,152.8 79.5,145.8 C79.9,138.8 82.7,133.8 85.1,127.2 C87.5,120.6 90.3,113.6 93.9,106.3 C97.5,98.9 96,86.8 106.5,83Z" fill="#222" /><path d="M109.3,88.1 C119.2,85 140.9,86.9 156.8,87.6 C172.6,88.3 195.2,87.6 204.5,92.3 C213.8,96.9 210.6,107 212.7,115.6 C214.7,124.1 215.8,135.7 216.8,143.5 C217.9,151.3 219,157 218.7,162.1 C218.4,167.3 217.9,171.5 215,174.2 C212,177 204.9,177 201,178.4 C197.1,179.9 193.6,179.6 191.7,183.1 C189.8,186.6 189.4,192.8 189.4,199.4 C189.4,206 201.8,218.8 191.7,222.7 C181.6,226.5 138.9,226.5 128.8,222.7 C118.7,218.8 132.3,206.8 131.2,199.4 C130,192 125.7,183.1 121.8,178.4 C118,173.8 113.7,173.4 107.9,171.4 C102.1,169.5 90.9,170.7 86.9,166.8 C83,162.9 84,154.8 84.1,148.2 C84.2,141.6 85.5,134.2 87.6,127.2 C89.8,120.2 93.3,112.8 96.9,106.3 C100.5,99.7 99.3,91.2 109.3,88.1Z" fill="#a4a4a4" /><path d="M71.6,169.6 C74.9,165.7 83.2,170.6 89.3,171.4 C95.3,172.3 102.4,172.6 107.9,174.9 C113.3,177.3 118,180.6 121.8,185.4 C125.7,190.3 130,198.2 131.2,204 C132.3,209.9 134.3,217.2 128.8,220.3 C123.4,223.4 108.7,222.7 98.6,222.7 C88.5,222.7 73.2,225 68.3,220.3 C63.4,215.7 68.7,203.2 69.2,194.7 C69.8,186.3 68.2,173.5 71.6,169.6Z" fill="#202020" /><path d="M75.3,178.4 C76.3,173.3 79,172.9 79.5,178 C79.9,183 79.1,203.6 78.1,208.7 C77.1,213.8 73.9,213.7 73.4,208.7 C73,203.7 74.3,183.6 75.3,178.4Z" fill="#4a4a4a" /><path d="M86.9,185.4 C87.5,181.1 91.4,180.4 92.7,184.3 C94.1,188.1 95.7,204.4 95.1,208.7 C94.5,213 90.6,213.7 89.3,209.9 C87.9,206 86.3,189.7 86.9,185.4Z" fill="#505050" /><path d="M102.1,190.1 C102.3,186.3 106.1,185.4 107.9,188.9 C109.7,192.4 113.2,207.3 113,211 C112.8,214.8 108.5,215 106.7,211.5 C104.9,208 101.9,193.8 102.1,190.1Z" fill="#565656" /><path d="M118.4,194.7 C118.6,191.7 121.5,192.8 123,195.9 C124.6,199 127.9,210.4 127.7,213.4 C127.5,216.3 123.4,216.9 121.8,213.8 C120.3,210.7 118.2,197.7 118.4,194.7Z" fill="#4c4c4c" /><path d="M191.7,185.4 C195.8,181.5 209.4,179.2 215,178.4 C220.6,177.7 222,177.3 225.5,180.8 C228.9,184.3 232.6,192.8 235.9,199.4 C239.2,206 252.2,216.8 245.2,220.3 C238.3,223.8 203.1,223.4 194,220.3 C184.9,217.2 190.9,207.5 190.5,201.7 C190.1,195.9 187.6,189.3 191.7,185.4Z" fill="#222" /><path d="M198.7,194.7 C199.3,190.7 203.1,189.7 204.5,193.6 C205.9,197.4 207.5,213.9 206.8,218 C206.2,222.1 201.9,221.9 200.5,218 C199.2,214.1 198,198.8 198.7,194.7Z" fill="#5c5c5c" /><path d="M212.7,190.1 C213,185.3 216.3,184.9 217.8,189.6 C219.2,194.3 221.9,213.2 221.5,218 C221.1,222.8 216.9,223.1 215.4,218.5 C214,213.8 212.3,194.9 212.7,190.1Z" fill="#585858" /><path d="M227.8,169.1 C228.4,165.2 231.9,164.8 234.8,171.4 C237.7,178 243.3,200.5 245.2,208.7 C247.2,216.8 247.8,218.4 246.6,220.3 C245.5,222.3 240.8,224.6 238.3,220.3 C235.7,216.1 233,203.3 231.3,194.7 C229.5,186.2 227.2,173 227.8,169.1Z" fill="#7c7c7c" /><path d="M140.5,199.4 C143.2,195.9 152.1,194.3 159.1,194.7 C166.1,195.1 177.7,197.8 182.4,201.7 C187,205.6 193.6,215.7 187,218 C180.4,220.3 150.6,218.8 142.8,215.7 C135,212.6 137.8,202.9 140.5,199.4Z" fill="#8c8c8c" /><path d="M154.4,206.4 C155.2,203.8 159.1,201.3 161.4,201.7 C163.8,202.1 168,206 168.4,208.7 C168.8,211.4 165.7,216.7 163.8,218 C161.8,219.4 158.3,218.8 156.8,216.8 C155.2,214.9 153.7,208.9 154.4,206.4Z" fill="#3a3a3a" /></g></g></g><g filter="url(#bl)"><path d="M103.7,142.3 C104.5,141.2 108,139.6 110.2,140 C112.5,140.4 115.4,142.7 117.2,144.7 C118.9,146.6 120.3,149.5 120.7,151.7 C121.1,153.8 120.8,156.4 119.5,157.5 C118.2,158.5 114.6,159.1 113,157.9 C111.4,156.8 111.5,152.3 110.2,150.5 C108.9,148.7 106.2,148.4 105.1,147 C104,145.6 102.8,143.5 103.7,142.3Z" fill="url(#gp)"/><path d="M143.3,140 C144.2,138.7 151.6,137.5 154.4,137.7 C157.3,137.9 159.1,139.5 160.3,141.2 C161.4,142.8 162.4,146.5 161.4,147.7 C160.5,148.9 156.6,148.9 154.4,148.6 C152.3,148.3 150.5,147.3 148.6,145.8 C146.8,144.4 142.3,141.4 143.3,140Z" fill="url(#gp)"/><ellipse cx="152.8" cy="112.5" rx="2.0" ry="2.0" fill="#8a6eff"/><ellipse cx="167.3" cy="182.6" rx="1.3" ry="1.3" fill="#8a6eff"/><path d="M191.7,149.3 C193.1,147.2 194.3,144.7 195.9,144.7 C197.4,144.7 200.2,147 201,149.3 C201.9,151.7 200.7,156.3 201,158.6 C201.3,161 203.6,162.2 202.9,163.3 C202.1,164.3 198.6,164.8 196.4,164.9 C194.1,165 190.8,165.2 189.4,164 C187.9,162.8 187.1,159.9 187.5,157.5 C187.9,155 190.3,151.5 191.7,149.3Z" fill="url(#gy)"/><ellipse cx="189.8" cy="128.8" rx="4.0" ry="3.6" fill="url(#gy)" transform="rotate(30 189.8 128.8)"/><ellipse cx="151.7" cy="181.2" rx="3.0" ry="5.5" fill="#ffac00" transform="rotate(15 151.7 181.2)"/><ellipse cx="183.5" cy="175.6" rx="3.6" ry="3.2" fill="#ffac00" transform="rotate(-30 183.5 175.6)"/></g></g><rect x="195" y="0" width="1" height="307" fill="#ffcc1a"/><rect x="0" y="151" width="303" height="1" fill="#ffcc1a"/></svg></div>
<div class="abs" style="left:0;top:728px;width:455px;height:1px;background:#1c2026"></div><div class="abs" style="left:0;top:729px;width:1366px;height:1px;background:#dfe6ee"></div>
</body>
</html>
